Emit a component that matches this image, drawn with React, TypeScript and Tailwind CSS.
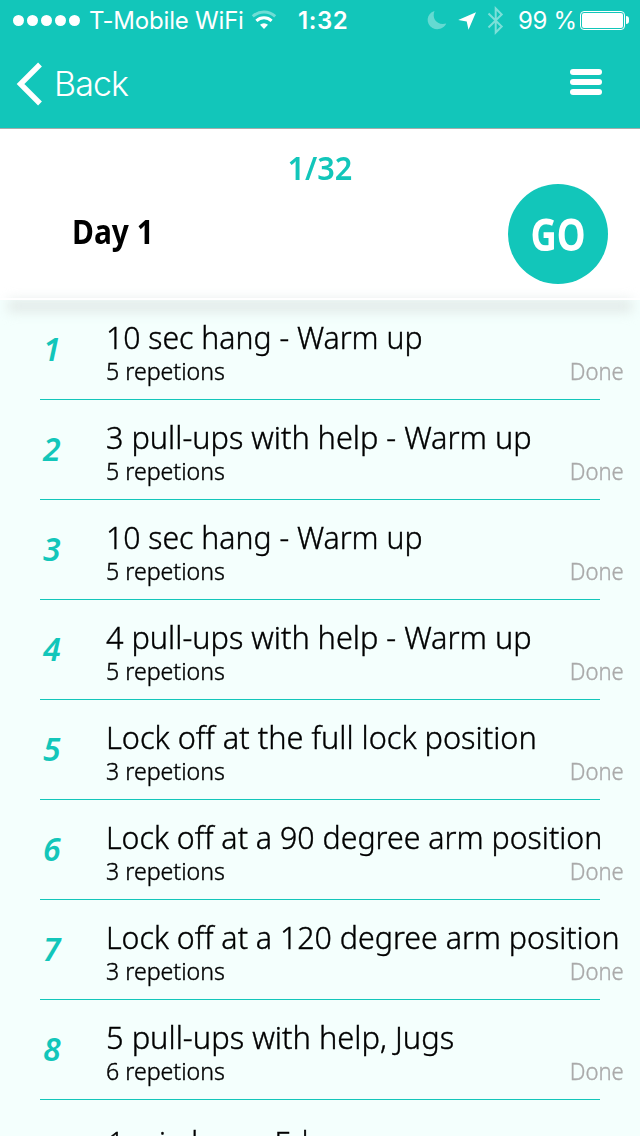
import { clsx } from "clsx";

type Exercise = { title: string; reps?: string; titleClass: string };

const exercises: Exercise[] = [
  { title: "10 sec hang - Warm up", reps: "5 repetions", titleClass: "scale-x-[0.943]" },
  { title: "3 pull-ups with help - Warm up", reps: "5 repetions", titleClass: "scale-x-[0.958]" },
  { title: "10 sec hang - Warm up", reps: "5 repetions", titleClass: "scale-x-[0.943]" },
  { title: "4 pull-ups with help - Warm up", reps: "5 repetions", titleClass: "scale-x-[0.958]" },
  { title: "Lock off at the full lock position", reps: "3 repetions", titleClass: "scale-x-[0.96]" },
  { title: "Lock off at a 90 degree arm position", reps: "3 repetions", titleClass: "scale-x-[0.948]" },
  { title: "Lock off at a 120 degree arm position", reps: "3 repetions", titleClass: "scale-x-[0.948]" },
  { title: "5 pull-ups with help, Jugs", reps: "6 repetions", titleClass: "scale-x-[0.964]" },
  { title: "1 min hang, Edge", titleClass: "scale-x-[0.925] pt-[5px] pl-0.5" },
];

function WifiIcon() {
  return (
    <svg width="26" height="20" viewBox="0 0 26 20" fill="none" stroke="white" strokeWidth="3">
      <path d="M1.8 6.3a16.5 16.5 0 0 1 22.4 0" opacity="0.4" />
      <path d="M5.4 10.8a11 11 0 0 1 15.2 0" />
      <path d="M13 19l-4-4.2a5.8 5.8 0 0 1 8 0z" fill="white" stroke="none" />
    </svg>
  );
}

function StatusBar() {
  return (
    <div className="flex h-10 items-center text-[24px] leading-10 text-white">
      <div className="ml-[13px] flex w-[67px] gap-[3px]">
        {[0, 1, 2, 3, 4].map((i) => <span key={i} className="size-[11px] shrink-0 rounded-full bg-white" />)}
      </div>
      <div className="ml-[9px] w-[155px] whitespace-nowrap pt-0.5 font-[380] tracking-[-0.2px]">T-Mobile WiFi</div>
      <div className="ml-[7px] w-[47px]"><WifiIcon /></div>
      <div className="w-[127px] whitespace-nowrap pt-0.5 font-semibold tracking-[0.6px]">1:32</div>
      <svg className="shrink-0" width="82" height="30" viewBox="425 5 82 30" fill="white">
        <path d="M434.5 11C426 13.5 425.5 24 432.5 28C438 31 444.5 28 446.2 23.5C437 25.8 431.5 18.5 434.5 11z" opacity="0.35" />
        <path d="M476 12.2l-17.8 7.7 8.5 1.6 1.8 8.3z" />
        <path d="M488.5 13.5l13.2 13-6 6V8.5l6 6-13.2 13" fill="none" stroke="white" strokeWidth="2" opacity="0.45" />
      </svg>
      <div className="ml-[11px] w-[62px] whitespace-nowrap pt-0.5 font-[380] tracking-[-0.3px]">99 %</div>
      <div className="flex h-[19px] w-[45px] rounded-[4px] border border-white p-px"><div className="flex-1 rounded-[2px] bg-white" /></div>
      <div className="ml-px h-2 w-[3px] rounded-r-full bg-white" />
    </div>
  );
}

function NavBar() {
  return (
    <div className="flex h-[88px] items-center text-white">
      <svg className="ml-4" width="27" height="44" viewBox="0 0 27 44" fill="none" stroke="white" strokeWidth="5.4">
        <path d="M24 2.5L4.5 22 24 41.5" />
      </svg>
      <span className="ml-[11px] text-[34px] leading-[40px] font-[350] tracking-[-0.9px]">Back</span>
      <div className="mr-[38px] mb-[5px] ml-auto flex w-8 flex-col gap-1">
        <div className="h-[6px] rounded-full bg-white" />
        <div className="h-[6px] rounded-full bg-white" />
        <div className="h-[6px] rounded-full bg-white" />
      </div>
    </div>
  );
}

function DayHeader() {
  return (
    <div className="relative h-[172px] border-t border-[#a6acac] bg-white font-['Noto_Sans',sans-serif]">
      {/* soft shadow under the panel */}
      <div className="absolute inset-x-2 top-[171px] h-3 bg-[#e1e9e7] blur-[6px]" />
      <div className="absolute inset-x-0 top-[169px] h-0.5 bg-white" />
      <div className="relative pt-[19px] text-center text-[33px] leading-10 text-[#12c6ba]">
        <span className="inline-block scale-x-93 font-semibold">1/32</span>
      </div>
      <div className="relative flex h-[92px] items-center pr-8 pl-[72px]">
        <h1 className="mb-[5px] origin-left scale-x-[0.88] text-[34px] font-bold text-black">Day 1</h1>
        <button className="ml-auto flex size-[100px] shrink-0 items-center justify-center rounded-full bg-[#12c6ba] text-[45px] font-bold text-white">
          <span className="scale-x-[0.81]">GO</span>
        </button>
      </div>
    </div>
  );
}

function ExerciseRow({ item, index }: { item: Exercise; index: number }) {
  return (
    <li className="flex h-[100px] flex-col">
      <div className="flex h-[99px]">
        <span className="ml-[43px] w-[63px] shrink-0 pt-[27px] text-[32px] leading-[44px] font-semibold text-[#12c6ba] italic">{index + 1}</span>
        <div className="w-[518px] whitespace-nowrap pt-[15px] font-light text-black">
          <div className={clsx("w-max origin-left text-[32px] leading-[44px] [-webkit-text-stroke:0.4px_black]", item.titleClass)}>{item.title}</div>
          {item.reps && (
            <div className="flex justify-between text-[23.5px] leading-6">
              <span className="origin-left scale-x-[0.985] [-webkit-text-stroke:0.4px_black]">{item.reps}</span>
              <span className="origin-right scale-x-[0.92] text-[24px] text-[#aaaaaa] [-webkit-text-stroke:0.4px_#aaaaaa]">Done</span>
            </div>
          )}
        </div>
      </div>
      <div className="mx-10 h-px bg-[#12c6ba]" />
    </li>
  );
}

export default function App() {
  return (
    <div className="h-[1136px] w-[640px] overflow-hidden bg-[#f4fffd] font-['Inter','Liberation_Sans',sans-serif]">
      <header className="bg-[#12c6ba]">
        <StatusBar />
        <NavBar />
      </header>
      <DayHeader />
      <ul className="font-['Noto_Sans',sans-serif]">
        {exercises.map((item, i) => <ExerciseRow key={i} item={item} index={i} />)}
      </ul>
    </div>
  );
}
